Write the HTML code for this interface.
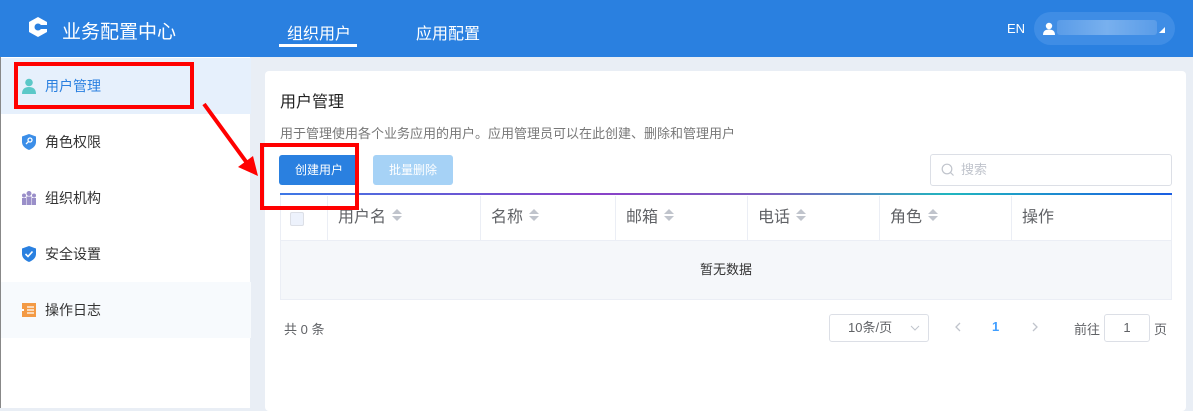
<!DOCTYPE html>
<html><head><meta charset="utf-8"><style>
*{margin:0;padding:0;box-sizing:border-box}
body{width:1193px;height:408px;overflow:hidden;background:#e9eef5;font-family:"Liberation Sans","Noto Sans CJK SC",sans-serif;position:relative}
.hd{position:absolute;left:0;top:0;width:1193px;height:57px;background:#2a80e0;color:#fff}
.abs{position:absolute}
.side{position:absolute;left:0;top:57px;width:250px;height:351px;background:#fff;border-left:1px solid #888}
.mi{position:absolute;left:0;width:250px;height:56px;font-size:14px;color:#333;line-height:56px;padding-left:44px}
.card{position:absolute;left:265px;top:71px;width:921px;height:340px;background:#fff;border-radius:4px}
.th{position:absolute;top:196px;height:44px;border-right:1px solid #ebeef5;font-size:16px;color:#606266;line-height:44px;padding-left:10px}
.sort{display:inline-block;width:10px;height:14px;vertical-align:-1px;margin-left:6px;position:relative}
.sort:before{content:"";position:absolute;left:0;top:0;border:5px solid transparent;border-bottom:5px solid #c0c4cc;border-top:0}
.sort:after{content:"";position:absolute;left:0;top:7px;border:5px solid transparent;border-top:5px solid #c0c4cc;border-bottom:0}
.red{position:absolute;border:4px solid #f00}
</style></head><body>
<div class="hd">
<svg class="abs" style="left:27px;top:16px" width="22" height="22" viewBox="0 0 22 22"><polygon points="11,1 20,6 20,16 11,21 2,16 2,6" fill="#fff"/><circle cx="11" cy="11" r="3.5" fill="#2a80e0"/><rect x="14" y="9" width="7" height="4" fill="#2a80e0"/></svg>
<div class="abs" style="left:62px;top:17px;font-size:19px">业务配置中心</div>
<div class="abs" style="left:287px;top:20px;font-size:16px">组织用户</div>
<div class="abs" style="left:279px;top:44px;width:78px;height:3px;background:#fff"></div>
<div class="abs" style="left:416px;top:20px;font-size:16px">应用配置</div>
<div class="abs" style="left:1007px;top:21px;font-size:13px">EN</div>
<div class="abs" style="left:1034px;top:12px;width:141px;height:33px;border-radius:17px;background:#3f8de5"></div>
<div class="abs" style="left:1057px;top:20px;width:100px;height:15px;background:linear-gradient(90deg,#5a9ce8,#78b0ee,#5a9ce8);border-radius:3px"></div>
<svg class="abs" style="left:1043px;top:22px" width="12" height="13" viewBox="0 0 12 13"><circle cx="6" cy="4" r="3.2" fill="#fff"/><path d="M0 13 Q0 7.5 6 7.5 Q12 7.5 12 13Z" fill="#fff"/></svg>
<div class="abs" style="left:1159px;top:27px;border-left:6px solid transparent;border-bottom:6px solid #fff;width:0;height:0"></div>
</div>
<div class="side">
<div class="mi" style="top:1px;background:#e6f0fc;color:#2a80e0">用户管理</div>
<svg class="abs" style="left:21px;top:21px" width="14" height="16" viewBox="0 0 14 16"><circle cx="7" cy="4.5" r="3.8" fill="#5bc8c8"/><path d="M0 16 Q0 9 7 9 Q14 9 14 16Z" fill="#5bc8c8"/></svg>
<div class="mi" style="top:57px">角色权限</div>
<svg class="abs" style="left:21px;top:77px" width="14" height="16" viewBox="0 0 14 16"><path d="M7 0 L14 2.5 V8 Q14 13 7 16 Q0 13 0 8 V2.5Z" fill="#3b8ee8"/><circle cx="8" cy="6" r="2" fill="none" stroke="#fff" stroke-width="1.3"/><path d="M6.6 7.4 L4 10" stroke="#fff" stroke-width="1.3"/></svg>
<div class="mi" style="top:113px">组织机构</div>
<svg class="abs" style="left:20px;top:134px" width="16" height="14" viewBox="0 0 16 14"><circle cx="8" cy="2.5" r="2.5" fill="#9a8fc9"/><circle cx="3" cy="4.5" r="2" fill="#9a8fc9"/><circle cx="13" cy="4.5" r="2" fill="#9a8fc9"/><rect x="5.5" y="5.5" width="5" height="8.5" fill="#9a8fc9"/><rect x="1" y="7" width="4" height="7" fill="#9a8fc9"/><rect x="11" y="7" width="4" height="7" fill="#9a8fc9"/></svg>
<div class="mi" style="top:169px">安全设置</div>
<svg class="abs" style="left:21px;top:189px" width="14" height="16" viewBox="0 0 14 16"><path d="M7 0 L14 2.5 V8 Q14 13 7 16 Q0 13 0 8 V2.5Z" fill="#2a80e0"/><path d="M3.5 8 L6 10.5 L10.5 5.5" fill="none" stroke="#fff" stroke-width="1.6"/></svg>
<div class="mi" style="top:225px;background:#f7fafd">操作日志</div>
<svg class="abs" style="left:21px;top:246px" width="14" height="14" viewBox="0 0 14 14"><rect width="14" height="14" fill="#f39a45"/><path d="M5 4H12M5 7H12M5 10H12" stroke="#fff" stroke-width="1.3"/><path d="M0 6H2V8H0Z" fill="#fff"/></svg>
</div>
<div class="card"></div>
<div class="abs" style="left:280px;top:88px;font-size:16px;color:#222">用户管理</div>
<div class="abs" style="left:280px;top:123px;font-size:13px;color:#777">用于管理使用各个业务应用的用户。应用管理员可以在此创建、删除和管理用户</div>
<div class="abs" style="left:279px;top:155px;width:80px;height:30px;background:#2a80e0;border-radius:3px;color:#fff;font-size:12px;text-align:center;line-height:30px">创建用户</div>
<div class="abs" style="left:373px;top:155px;width:80px;height:30px;background:#a6d2f6;border-radius:3px;color:#fff;font-size:12px;text-align:center;line-height:30px">批量删除</div>
<div class="abs" style="left:930px;top:154px;width:242px;height:32px;border:1px solid #dcdfe6;border-radius:3px;font-size:13px;color:#c0c4cc;line-height:30px;padding-left:30px">搜索</div>
<svg class="abs" style="left:941px;top:163px" width="14" height="14" viewBox="0 0 14 14"><circle cx="6" cy="6" r="4.8" fill="none" stroke="#c0c4cc" stroke-width="1.2"/><path d="M9.5 9.5L12.5 12.5" stroke="#c0c4cc" stroke-width="1.2"/></svg>
<div class="abs" style="left:280px;top:193px;width:892px;height:2px;background:linear-gradient(90deg,#3d78e6 0%,#8a40c8 35%,#7a5ec0 55%,#20b6bf 75%,#1a5de2 100%)"></div>
<div class="abs" style="left:280px;top:195px;width:892px;height:105px;border:1px solid #ebeef5;border-top:0"></div>
<div class="th" style="left:280px;width:48px"></div>
<div class="abs" style="left:290px;top:212px;width:14px;height:14px;border:1px solid #dcdfe6;border-radius:2px;background:#edf2fc"></div>
<div class="th" style="left:328px;width:153px">用户名<span class="sort"></span></div>
<div class="th" style="left:481px;width:135px">名称<span class="sort"></span></div>
<div class="th" style="left:616px;width:132px">邮箱<span class="sort"></span></div>
<div class="th" style="left:748px;width:132px">电话<span class="sort"></span></div>
<div class="th" style="left:880px;width:132px">角色<span class="sort"></span></div>
<div class="th" style="left:1012px;width:160px;border-right:0">操作</div>
<div class="abs" style="left:281px;top:240px;width:890px;height:59px;background:#f5f7fa;border-top:1px solid #ebeef5;text-align:center;line-height:58px;font-size:13px;color:#333">暂无数据</div>
<div class="abs" style="left:284px;top:319px;font-size:13px;color:#606266">共 0 条</div>
<div class="abs" style="left:829px;top:314px;width:100px;height:28px;border:1px solid #dcdfe6;border-radius:3px;font-size:13px;color:#606266;line-height:26px;padding-left:18px">10条/页</div>
<svg class="abs" style="left:910px;top:325px" width="10" height="6" viewBox="0 0 10 6"><path d="M1 1L5 5L9 1" fill="none" stroke="#c0c4cc"/></svg>
<svg class="abs" style="left:955px;top:322px" width="6" height="10" viewBox="0 0 6 10"><path d="M5 1L1 5L5 9" fill="none" stroke="#c0c4cc" stroke-width="1.3"/></svg>
<div class="abs" style="left:992px;top:319px;font-size:13px;color:#409eff;font-weight:bold">1</div>
<svg class="abs" style="left:1032px;top:322px" width="6" height="10" viewBox="0 0 6 10"><path d="M1 1L5 5L1 9" fill="none" stroke="#c0c4cc" stroke-width="1.3"/></svg>
<div class="abs" style="left:1074px;top:319px;font-size:13px;color:#606266">前往</div>
<div class="abs" style="left:1104px;top:314px;width:46px;height:28px;border:1px solid #dcdfe6;border-radius:3px;font-size:13px;color:#606266;line-height:26px;text-align:center">1</div>
<div class="abs" style="left:1154px;top:319px;font-size:13px;color:#606266">页</div>
<div class="red" style="left:14px;top:62px;width:180px;height:47px"></div>
<div class="red" style="left:260px;top:143px;width:99px;height:67px"></div>
<svg class="abs" style="left:0;top:0" width="1193" height="408"><path d="M204 104L247 163" stroke="#f00" stroke-width="4"/><polygon points="258,176 238,167 253,156" fill="#f00"/></svg>
</body></html>
